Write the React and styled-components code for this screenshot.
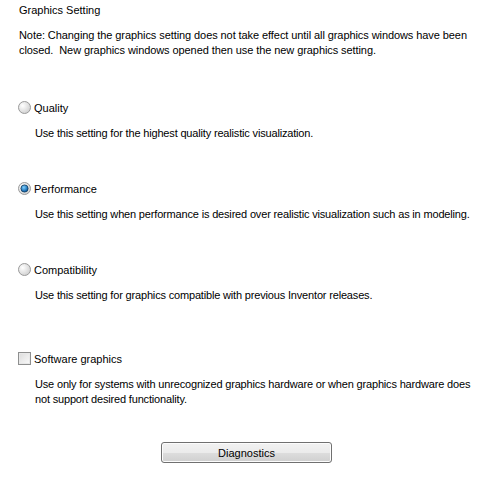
import React from 'react';
import styled, { createGlobalStyle } from 'styled-components';

const Global = createGlobalStyle`
  html, body { margin: 0; padding: 0; background: #fff; }
  body { font-family: Tahoma, "Liberation Sans", Arial, sans-serif; font-size: 11px; color: #000; }
`;

const Page = styled.div`
  width: 482px;
  height: 496px;
  box-sizing: border-box;
  padding: 3px 0 0 19px;
  display: flex;
  flex-direction: column;
  white-space: nowrap;
  overflow: hidden;
`;

const Line = styled.div`
  line-height: 15px;
  height: 15px;
`;

const Note = styled.div`
  margin-top: 10px;
  line-height: 15px;
  letter-spacing: -0.08px;
`;

const Option = styled.div`
  margin-top: ${p => p.$top}px;
  display: flex;
  flex-direction: column;
`;

const Row = styled.label`
  display: flex;
  align-items: center;
  height: 15px;
  gap: 3px;
  margin-left: -1px;
`;

const Desc = styled.div`
  margin-top: 11px;
  padding-left: 16px;
  line-height: 15px;
  letter-spacing: -0.17px;
`;

const Box = styled.span`
  width: 11px;
  height: 11px;
  border: 1px solid #8e8f8f;
  background: linear-gradient(135deg, #dcdcdc 0%, #f4f4f4 80%, #fff 100%);
  box-shadow: inset 0 0 0 1px #e8e8e8;
`;

const ButtonRow = styled.div`
  margin-top: 35px;
  padding-left: 142px;
`;

const Button = styled.button`
  width: 171px;
  height: 21px;
  border: 1px solid #707070;
  border-radius: 3px;
  background: linear-gradient(#f2f2f2 0%, #ebebeb 50%, #dddddd 51%, #cfcfcf 100%);
  box-shadow: inset 0 0 0 1px #fcfcfc;
  font: inherit;
  color: #000;
  padding: 0;
`;

const Radio = ({ checked }) => (
  <svg width="13" height="13" viewBox="0 0 13 13">
    <defs>
      <radialGradient id="rg" cx="0.35" cy="0.35" r="0.7">
        <stop offset="0" stopColor="#ffffff" />
        <stop offset="1" stopColor="#d0d0d0" />
      </radialGradient>
      <radialGradient id="bg" cx="0.4" cy="0.35" r="0.6">
        <stop offset="0" stopColor="#7fd0ff" />
        <stop offset="1" stopColor="#0b5fa8" />
      </radialGradient>
    </defs>
    <circle cx="6.5" cy="6.5" r="6" fill="url(#rg)" stroke="#9a9a9a" />
    {checked && <circle cx="6.5" cy="6.5" r="3.6" fill="url(#bg)" stroke="#103a5c" strokeWidth="0.8" />}
  </svg>
);

export default function App() {
  return (
    <Page>
      <Global />
      <Line>Graphics Setting</Line>
      <Note>
        Note: Changing the graphics setting does not take effect until all graphics windows have been<br />
        closed.&nbsp; New graphics windows opened then use the new graphics setting.
      </Note>
      <Option $top={42}>
        <Row><Radio /> Quality</Row>
        <Desc>Use this setting for the highest quality realistic visualization.</Desc>
      </Option>
      <Option $top={40}>
        <Row><Radio checked /> Performance</Row>
        <Desc>Use this setting when performance is desired over realistic visualization such as in modeling.</Desc>
      </Option>
      <Option $top={40}>
        <Row><Radio /> Compatibility</Row>
        <Desc>Use this setting for graphics compatible with previous Inventor releases.</Desc>
      </Option>
      <Option $top={48}>
        <Row><Box /> Software graphics</Row>
        <Desc>
          Use only for systems with unrecognized graphics hardware or when graphics hardware does<br />
          not support desired functionality.
        </Desc>
      </Option>
      <ButtonRow>
        <Button>Diagnostics</Button>
      </ButtonRow>
    </Page>
  );
}
